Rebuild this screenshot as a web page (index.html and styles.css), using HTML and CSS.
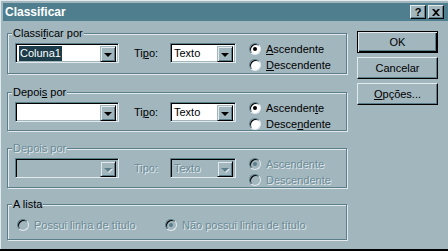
FILE: index.html
```html
<!DOCTYPE html>
<html lang="pt">
<head>
    <meta charset="UTF-8">
    <title>Classificar</title>
    <link rel="stylesheet" href="styles.css">
</head>
<body>
    <div class="dialog">
        <div class="titlebar">
            <span class="title">Classificar</span>
            <div class="caption-buttons">
                <span class="cap-btn">?</span>
                <span class="cap-btn">
                    <svg width="8" height="7" viewBox="0 0 8 7"><path d="M0 0h2l2 2 2-2h2L5 3.5 8 7H6L4 5 2 7H0l3-3.5z" fill="#000"/></svg>
                </span>
            </div>
        </div>

        <div class="content">
            <div class="groups">
                <div class="group group-1">
                    <span class="group-label">Classi<u>f</u>icar por</span>
                    <div class="combo combo-col">
                        <span class="combo-field"><span class="selected">Coluna1</span></span>
                        <span class="combo-btn"><span class="arrow"></span></span>
                    </div>
                    <span class="tipo">Ti<u>p</u>o:</span>
                    <div class="combo combo-type">
                        <span class="combo-field">Texto</span>
                        <span class="combo-btn"><span class="arrow"></span></span>
                    </div>
                    <div class="radios">
                        <div class="radio-row"><span class="radio checked"></span><span><u>A</u>scendente</span></div>
                        <div class="radio-row"><span class="radio"></span><span><u>D</u>escendente</span></div>
                    </div>
                </div>

                <div class="group group-2">
                    <span class="group-label">Depoi<u>s</u> por</span>
                    <div class="combo combo-col">
                        <span class="combo-field"></span>
                        <span class="combo-btn"><span class="arrow"></span></span>
                    </div>
                    <span class="tipo">Ti<u>p</u>o:</span>
                    <div class="combo combo-type">
                        <span class="combo-field">Texto</span>
                        <span class="combo-btn"><span class="arrow"></span></span>
                    </div>
                    <div class="radios">
                        <div class="radio-row"><span class="radio checked"></span><span>Ascenden<u>t</u>e</span></div>
                        <div class="radio-row"><span class="radio"></span><span>Desce<u>n</u>dente</span></div>
                    </div>
                </div>

                <div class="group group-3 disabled">
                    <span class="group-label">Depois por</span>
                    <div class="combo combo-col">
                        <span class="combo-field"></span>
                        <span class="combo-btn"><span class="arrow"></span></span>
                    </div>
                    <span class="tipo">Tipo:</span>
                    <div class="combo combo-type">
                        <span class="combo-field">Texto</span>
                        <span class="combo-btn"><span class="arrow"></span></span>
                    </div>
                    <div class="radios">
                        <div class="radio-row"><span class="radio checked"></span><span>Ascendente</span></div>
                        <div class="radio-row"><span class="radio"></span><span>Descendente</span></div>
                    </div>
                </div>

                <div class="group group-4">
                    <span class="group-label">A lista</span>
                    <div class="list-options disabled">
                        <div class="radio-row"><span class="radio"></span><span>Possui linha de título</span></div>
                        <div class="radio-row"><span class="radio checked"></span><span>Não possui linha de título</span></div>
                    </div>
                </div>
            </div>

            <div class="actions">
                <button class="btn btn-default">OK</button>
                <button class="btn">Cancelar</button>
                <button class="btn"><u>O</u>pções...</button>
            </div>
        </div>
    </div>
    <div class="screen-edge"></div>
</body>
</html>
```

FILE: styles.css
```css
:root {
    --face: #a2b6be;
    --light: #e2eaed;
    --shadow: #5c7e8a;
    --dark: #000;
    --title: #4f7f8f;
    --select: #1c3c4a;
    --gray-text: #6b8b97;
}

* {
    margin: 0;
    padding: 0;
    box-sizing: border-box;
}

body {
    width: 448px;
    height: 251px;
    overflow: hidden;
    background-color: var(--face);
    font-family: 'Liberation Sans', Arial, sans-serif;
    font-size: 11px;
    line-height: 13px;
    color: #000;
}

u {
    text-decoration-thickness: 1px;
    text-underline-offset: 1px;
}

.dialog {
    height: 249px;
    padding: 2px 0 0 2px;
    border-top: 1px solid var(--light);
    border-left: 1px solid var(--light);
}

/* title bar */
.titlebar {
    height: 18px;
    background-color: var(--title);
    display: flex;
    align-items: center;
    justify-content: space-between;
    padding: 0 4px 0 2px;
}

.title {
    color: #fff;
    font-weight: bold;
    font-size: 12px;
}

.caption-buttons {
    display: flex;
    gap: 2px;
}

.cap-btn {
    width: 16px;
    height: 14px;
    background-color: var(--face);
    border: 1px solid;
    border-color: var(--light) var(--dark) var(--dark) var(--light);
    box-shadow: inset -1px -1px 0 var(--shadow);
    display: flex;
    align-items: center;
    justify-content: center;
    font-weight: bold;
    font-size: 11px;
    line-height: 11px;
}

/* main area */
.content {
    display: flex;
    padding: 0 0 0 4px;
}

.groups {
    width: 340px;
    display: flex;
    flex-direction: column;
}

.group {
    position: relative;
    display: flex;
    align-items: flex-start;
    border: 1px solid var(--shadow);
    box-shadow: 1px 1px 0 var(--light), inset 1px 1px 0 var(--light);
    padding: 7px 0 0 7px;
}

.group-1 {
    margin-top: 12px;
    height: 41px;
}

.group-2 {
    margin-top: 18px;
    height: 39px;
}

.group-3 {
    margin-top: 17px;
    height: 40px;
}

.group-4 {
    margin-top: 16px;
    height: 36px;
}

.group-label {
    position: absolute;
    top: -7px;
    left: 4px;
    padding: 0 1px;
    background-color: var(--face);
}

/* combo boxes */
.combo {
    display: flex;
    height: 20px;
    margin-top: 2px;
    background-color: #fff;
    border: 1px solid;
    border-color: var(--shadow) var(--light) var(--light) var(--shadow);
    box-shadow: inset 1px 1px 0 var(--dark), inset -1px -1px 0 var(--face);
    padding: 2px;
}

.combo-col {
    width: 104px;
}

.combo-type {
    width: 66px;
}

.combo-field {
    flex: 1;
    padding-left: 1px;
    display: flex;
    align-items: center;
}

.selected {
    background-color: var(--select);
    color: #fff;
    padding: 1px 1px;
}

.combo-btn {
    width: 16px;
    height: 16px;
    background-color: var(--face);
    border: 1px solid;
    border-color: var(--face) var(--dark) var(--dark) var(--face);
    box-shadow: inset 1px 1px 0 var(--light), inset -1px -1px 0 var(--shadow);
    display: flex;
    align-items: center;
    justify-content: center;
}

.arrow {
    width: 0;
    height: 0;
    border-left: 4px solid transparent;
    border-right: 4px solid transparent;
    border-top: 4px solid #000;
    margin-top: 1px;
}

.tipo {
    width: 36px;
    margin: 6px 0 0 15px;
}

/* radio buttons */
.radios {
    display: flex;
    flex-direction: column;
    margin-left: 13px;
}

.radio-row {
    display: flex;
    align-items: center;
    gap: 5px;
    height: 16px;
}

.radio {
    position: relative;
    width: 12px;
    height: 12px;
    border-radius: 50%;
    background-color: #fff;
    border: 1px solid;
    border-color: var(--shadow) var(--light) var(--light) var(--shadow);
    box-shadow: inset 1px 1px 0 var(--dark);
}

.radio.checked::after {
    content: "";
    position: absolute;
    left: 3px;
    top: 3px;
    width: 4px;
    height: 4px;
    border-radius: 50%;
    background-color: #000;
}

/* disabled controls */
.disabled .group-label,
.disabled .tipo,
.disabled .radio-row span:last-child,
.disabled .combo-field {
    color: var(--gray-text);
    text-shadow: 1px 1px 0 var(--light);
}

.disabled .combo {
    background-color: var(--face);
}

.disabled .arrow {
    border-top-color: var(--shadow);
    filter: drop-shadow(1px 1px 0 var(--light));
}

.disabled .radio {
    background-color: var(--face);
}

.disabled .radio.checked::after {
    background-color: var(--shadow);
}

.list-options {
    display: flex;
    padding: 5px 0 0 2px;
}

.list-options .radio-row:first-child {
    width: 148px;
}

/* buttons on the right */
.actions {
    display: flex;
    flex-direction: column;
    gap: 4px;
    margin: 10px 0 0 10px;
}

.btn {
    width: 81px;
    height: 22px;
    font-family: inherit;
    font-size: 11px;
    background-color: var(--face);
    border: 1px solid;
    border-color: var(--light) var(--dark) var(--dark) var(--light);
    box-shadow: inset -1px -1px 0 var(--shadow);
    color: #000;
}

.btn-default {
    border-color: var(--dark);
    box-shadow: inset 1px 1px 0 var(--light), inset -1px -1px 0 var(--dark), inset -2px -2px 0 var(--shadow);
}

.screen-edge {
    height: 2px;
    background-color: #000;
}
```
